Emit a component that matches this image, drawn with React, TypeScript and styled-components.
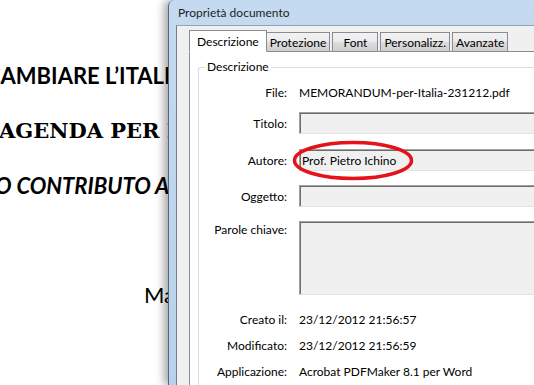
import React from "react";
import styled, { createGlobalStyle, css } from "styled-components";

const GlobalStyle = createGlobalStyle`
  html, body {
    margin: 0;
    padding: 0;
    background: #ffffff;
    overflow: hidden;
  }
`;

const Page = styled.div`
  display: flex;
  width: 534px;
  height: 385px;
  overflow: hidden;
  background: #ffffff;
`;

const Document = styled.div`
  flex: none;
  width: 168px;
  display: flex;
  flex-direction: column;
  overflow: hidden;
  background: #ffffff;
  color: #000000;
`;

type LineKind = "title" | "serif" | "italic" | "plain";

const lineFonts: Record<LineKind, ReturnType<typeof css>> = {
  title: css`
    font-family: Lato, "Liberation Sans", sans-serif;
    font-weight: 700;
    font-size: 22px;
  `,
  serif: css`
    font-family: "DejaVu Serif", "Liberation Serif", serif;
    font-weight: 700;
    font-size: 21px;
  `,
  italic: css`
    font-family: Lato, "Liberation Sans", sans-serif;
    font-weight: 700;
    font-style: italic;
    font-size: 22px;
  `,
  plain: css`
    font-family: Lato, "Liberation Sans", sans-serif;
    font-size: 22px;
  `,
};

const DocLine = styled.div<{ $kind: LineKind; $top: number; $indent: number }>`
  ${(p) => lineFonts[p.$kind]}
  margin-top: ${(p) => p.$top}px;
  margin-left: ${(p) => p.$indent}px;
  height: 24px;
  line-height: 24px;
  white-space: nowrap;
`;

const Window = styled.div`
  position: relative;
  flex: none;
  width: 420px;
  display: flex;
  flex-direction: column;
  background: linear-gradient(180deg, #c4daf1 0%, #b9d1ea 100%);
  border-left: 1px solid #55657a;
  border-top-left-radius: 6px;
  box-shadow: -4px 0 8px rgba(0, 0, 0, 0.35);
  padding-left: 7px;
  font-family: Lato, "Noto Sans", sans-serif;
  font-size: 12px;
  color: #000000;
`;

const TitleBar = styled.div`
  height: 26px;
  line-height: 25px;
  padding-left: 2px;
  color: #1e1e1e;
`;

const Client = styled.div`
  flex: 1;
  display: flex;
  flex-direction: column;
  background: #f0f0f0;
  border-top: 1px solid #8da2bb;
  border-left: 1px solid #6f7f93;
  padding: 4px 0 0 12px;
`;

const TabStrip = styled.div`
  display: flex;
  align-items: flex-end;
  height: 21px;
  position: relative;
  z-index: 1;
`;

const Tab = styled.div<{ $active?: boolean }>`
  box-sizing: border-box;
  min-width: 46px;
  text-align: center;
  height: ${(p) => (p.$active ? 22 : 19)}px;
  margin-right: ${(p) => (p.$active ? -1 : 2)}px;
  padding: 0 ${(p) => (p.$active ? 7 : 3)}px;
  border: 1px solid #898c95;
  border-bottom: ${(p) => (p.$active ? "1px solid #ffffff" : "none")};
  margin-bottom: ${(p) => (p.$active ? -1 : 0)}px;
  background: ${(p) =>
    p.$active
      ? "#ffffff"
      : "linear-gradient(180deg, #f2f2f2 0%, #ebebeb 50%, #dddddd 51%, #cfcfcf 100%)"};
  line-height: ${(p) => (p.$active ? 22 : 19)}px;
  white-space: nowrap;
  position: relative;
  z-index: ${(p) => (p.$active ? 1 : 0)};
`;

const Panel = styled.div`
  flex: 1;
  background: #ffffff;
  border-top: 1px solid #898c95;
  border-left: 1px solid #898c95;
  padding: 7px 0 0 8px;
`;

const GroupBox = styled.fieldset`
  margin: 0;
  padding: 0;
  border: 1px solid #d5dfe5;
  border-right: none;
  border-top-left-radius: 3px;
  height: 340px;
`;

const Legend = styled.legend`
  margin-left: 6px;
  padding: 0 2px;
  line-height: 16px;
`;

const Row = styled.div<{ $top: number; $tall?: boolean }>`
  display: flex;
  align-items: ${(p) => (p.$tall ? "flex-start" : "center")};
  margin-top: ${(p) => p.$top}px;
  min-height: 22px;
`;

const Label = styled.div<{ $tall?: boolean }>`
  flex: none;
  width: 88px;
  margin-right: 12px;
  text-align: right;
  white-space: nowrap;
  padding-top: ${(p) => (p.$tall ? 1 : 0)}px;
`;

const Value = styled.div`
  white-space: nowrap;
`;

const FieldWrap = styled.div`
  position: relative;
  flex: 1;
`;

const Field = styled.div<{ $height: number }>`
  box-sizing: border-box;
  height: ${(p) => p.$height}px;
  background: #f0f0f0;
  border: 1px solid;
  border-color: #a0a0a0 #e3e3e3 #e3e3e3 #a0a0a0;
  box-shadow: inset 1px 1px 0 #6d6d6d;
  padding: 2px 2px 0 2px;
  line-height: 17px;
  white-space: nowrap;
`;

const Highlight = styled.svg`
  position: absolute;
  left: -7px;
  top: -9px;
  width: 122px;
  height: 41px;
  pointer-events: none;
`;

const rows = [
  { label: "Creato il:", value: "23/12/2012 21:56:57", top: 13 },
  { label: "Modificato:", value: "23/12/2012 21:56:59", top: 4 },
  { label: "Applicazione:", value: "Acrobat PDFMaker 8.1 per Word", top: 4 },
];

const tabs = ["Descrizione", "Protezione", "Font", "Personalizz.", "Avanzate"];

export default function App() {
  return (
    <>
      <GlobalStyle />
      <Page>
        <Document>
          <DocLine $kind="title" $top={64} $indent={-14}>
            CAMBIARE L’ITALIA
          </DocLine>
          <DocLine $kind="serif" $top={31} $indent={-1}>
            AGENDA PER L
          </DocLine>
          <DocLine $kind="italic" $top={31} $indent={-5}>
            O CONTRIBUTO AL
          </DocLine>
          <DocLine $kind="plain" $top={85} $indent={144}>
            Ma
          </DocLine>
        </Document>

        <Window>
          <TitleBar>Proprietà documento</TitleBar>
          <Client>
            <TabStrip>
              {tabs.map((t, i) => (
                <Tab key={t} $active={i === 0}>
                  {t}
                </Tab>
              ))}
            </TabStrip>
            <Panel>
              <GroupBox>
                <Legend>Descrizione</Legend>
                <Row $top={6}>
                  <Label>File:</Label>
                  <Value>MEMORANDUM-per-Italia-231212.pdf</Value>
                </Row>
                <Row $top={9}>
                  <Label>Titolo:</Label>
                  <FieldWrap>
                    <Field $height={22} />
                  </FieldWrap>
                </Row>
                <Row $top={15}>
                  <Label>Autore:</Label>
                  <FieldWrap>
                    <Field $height={22}>Prof. Pietro Ichino</Field>
                    <Highlight viewBox="0 0 122 41">
                      <ellipse
                        cx="61"
                        cy="20.5"
                        rx="58.5"
                        ry="18"
                        fill="none"
                        stroke="#e5121b"
                        strokeWidth="3.5"
                      />
                    </Highlight>
                  </FieldWrap>
                </Row>
                <Row $top={14}>
                  <Label>Oggetto:</Label>
                  <FieldWrap>
                    <Field $height={22} />
                  </FieldWrap>
                </Row>
                <Row $top={14} $tall>
                  <Label $tall>Parole chiave:</Label>
                  <FieldWrap>
                    <Field $height={74} />
                  </FieldWrap>
                </Row>
                {rows.map((r) => (
                  <Row key={r.label} $top={r.top}>
                    <Label>{r.label}</Label>
                    <Value>{r.value}</Value>
                  </Row>
                ))}
              </GroupBox>
            </Panel>
          </Client>
        </Window>
      </Page>
    </>
  );
}
